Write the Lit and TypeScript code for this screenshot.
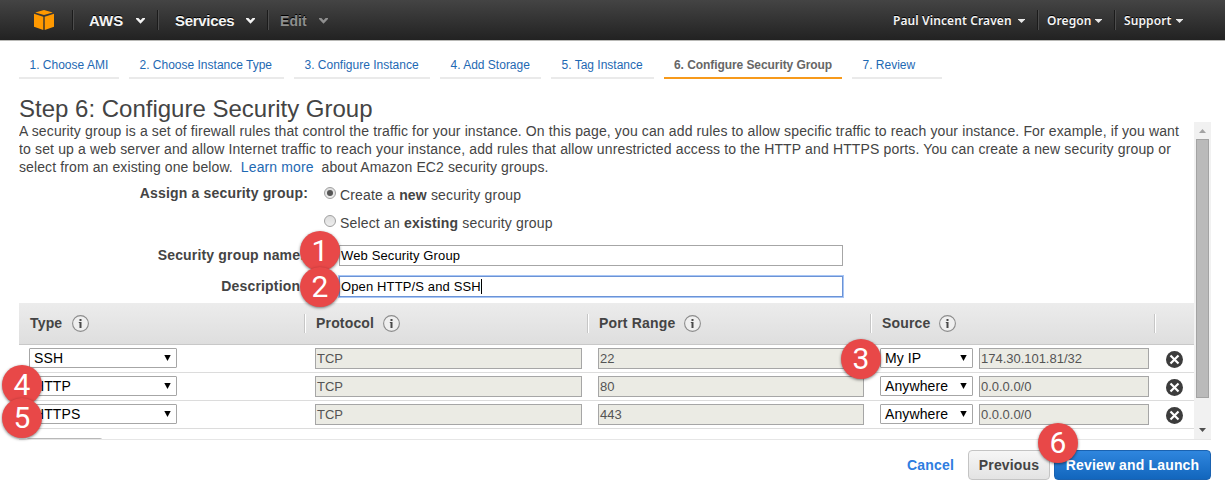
import { LitElement, html, css } from "lit";
import { customElement, property } from "lit/decorators.js";
import { classMap } from "lit/directives/class-map.js";

@customElement("info-icon")
class InfoIcon extends LitElement {
  static styles = css`
    :host { display: block; width: 17px; height: 17px; }
    svg { display: block; }
  `;
  render() {
    return html`<svg width="17" height="17" viewBox="0 0 17 17">
      <circle cx="8.5" cy="8.5" r="7.9" fill="#efefef" stroke="#8c8c8c" stroke-width="1.1" />
      <path d="M7.500 4h2v2h-2zM6.800 7h2.700v6h-2V8h-.7z" fill="#4a4a4a" />
    </svg>`;
  }
}

@customElement("select-box")
class SelectBox extends LitElement {
  @property() value = "";
  static styles = css`
    :host {
      display: flex; align-items: center; justify-content: space-between;
      box-sizing: border-box; height: 20px; padding: 0 5px 0 4px;
      border: 1px solid #a6a6a6; border-radius: 1px; background: #fff;
      color: #000; font-size: 14px; letter-spacing: 0.1px; line-height: 18px;
    }
    svg { display: block; }
  `;
  render() {
    return html`<span>${this.value}</span
      ><svg width="7" height="6" viewBox="0 0 7 6"><path d="M.3 0h6.4L3.5 6z" fill="#000" /></svg>`;
  }
}

const tabs = [
  { label: "1. Choose AMI", width: 100 },
  { label: "2. Choose Instance Type", width: 155 },
  { label: "3. Configure Instance", width: 136 },
  { label: "4. Add Storage", width: 101 },
  { label: "5. Tag Instance", width: 103 },
  { label: "6. Configure Security Group", width: 178, active: true },
  { label: "7. Review", width: 90 },
];

const rules = [
  { type: "SSH", protocol: "TCP", port: "22", source: "My IP", cidr: "174.30.101.81/32" },
  { type: "HTTP", protocol: "TCP", port: "80", source: "Anywhere", cidr: "0.0.0.0/0" },
  { type: "HTTPS", protocol: "TCP", port: "443", source: "Anywhere", cidr: "0.0.0.0/0" },
];

const callouts = [
  { n: 1, x: 320, y: 251 },
  { n: 2, x: 320, y: 287 },
  { n: 3, x: 861, y: 359 },
  { n: 4, x: 22, y: 385 },
  { n: 5, x: 22, y: 418 },
  { n: 6, x: 1058, y: 443 },
];

const chevron = html`<svg class="chev" width="9" height="6" viewBox="0 0 9 6">
  <path d="M0 0h2.4l2.1 2.3L6.6 0H9v1L4.5 5.7 0 1z" fill="currentColor" /></svg>`;
const caret = html`<svg class="caret" width="7" height="4" viewBox="0 0 7 4">
  <path d="M0 0h7v.6L3.5 4 0 .6z" fill="#e8e8e8" /></svg>`;

@customElement("app-root")
class AppRoot extends LitElement {
  static styles = css`
    :host {
      display: flex; flex-direction: column; position: relative; overflow: hidden;
      width: 1225px; height: 488px; box-sizing: border-box; background: #fff;
      font-family: "Liberation Sans", Arial, sans-serif; font-size: 14px; color: #444;
    }
    svg { display: block; flex: none; }
    .nav {
      flex: none; height: 40px; display: flex; align-items: center;
      background: linear-gradient(#444, #222); border-bottom: 1px solid #b9b9b6;
      color: #f4f4f4; text-shadow: 0 -1px 0 #000;
    }
    .cube { margin: 0 18px 0 34px; }
    .sep { width: 1px; height: 20px; background: #1b1b1b; border-right: 1px solid #4d4d4d; flex: none; }
    .menu {
      display: flex; align-items: center; justify-content: space-between; box-sizing: border-box;
      font-weight: bold; line-height: 20px; white-space: nowrap;
    }
    .menu span { padding-top: 2px; }
    .chev { margin-top: 2px; }
    .aws { width: 83px; padding: 0 12px 0 15px; }
    .aws, .services { font-size: 15px; }
    .services { width: 108px; padding: 0 12px 0 16px; letter-spacing: -0.3px; }
    .edit { width: 59px; padding-left: 11px; color: #8f8f8f; font-size: 14px; letter-spacing: 0.1px; }
    .right { margin-left: auto; display: flex; align-items: center; padding-right: 42px; }
    .acct {
      display: flex; align-items: center; justify-content: space-between; white-space: nowrap;
      box-sizing: border-box; font-family: "Noto Sans", sans-serif; font-weight: 600;
      font-size: 12px; line-height: 20px; letter-spacing: 0.1px;
    }
    .acct span { padding-top: 2px; }
    .caret { margin-top: 2px; }
    .user { width: 144px; padding-right: 12px; }
    .region { width: 75px; padding: 0 12px 0 8px; }
    .support { width: 67px; padding-left: 8px; }
    .tabs { flex: none; display: flex; gap: 10px; padding: 14px 0 0 19px; }
    .tab {
      box-sizing: border-box; height: 24px; padding-left: 10.5px; border-bottom: 2px solid #eaeaea;
      font-size: 12px; line-height: 20px; color: #1e69b3; white-space: nowrap;
    }
    .tab.active { padding-left: 10px; border-color: #f79a1b; color: #666; font-weight: bold; letter-spacing: -0.07px; }
    h1 { flex: none; margin: 13px 0 0 19px; height: 30px; line-height: 33px; font-size: 24px; font-weight: normal; }
    .scroller { flex: none; height: 317px; display: flex; margin: 0 14px 0 19px; border-bottom: 1px solid #e6e6e6; }
    .content { width: 1175px; height: 317px; overflow: hidden; letter-spacing: 0.17px; }
    .para { height: 54px; line-height: 18px; white-space: pre; letter-spacing: 0.13px; }
    .second { letter-spacing: 0.146px; }
    .last { letter-spacing: 0.11px; }
    .link { color: #1e69b3; }
    .form { display: flex; flex-direction: column; padding-top: 8px; height: 127px; box-sizing: border-box; }
    .field { display: flex; flex: none; line-height: 18px; }
    .pick { height: 28px; }
    .first { margin-top: 5px; }
    .text { height: 31px; }
    .label { width: 289px; text-align: right; font-weight: bold; box-sizing: border-box; }
    .text .label { padding: 1px 3px 0 0; }
    .radio {
      box-sizing: border-box; width: 12px; height: 12px; margin: 3px 4px 0 16px; border-radius: 50%;
      border: 1px solid #a0a0a0; background: linear-gradient(#ddd, #eee); flex: none;
      display: flex; align-items: center; justify-content: center;
    }
    .dot { width: 6px; height: 6px; border-radius: 50%; background: #555; }
    .choice { padding-top: 2px; }
    .input {
      box-sizing: border-box; width: 504px; height: 21px; margin-left: 31px; padding-left: 1px;
      border: 1px solid #a6a6a6; color: #000; font-size: 13px; line-height: 19px; letter-spacing: 0.13px;
      display: flex; align-items: center;
    }
    .focus { border-color: #6b93d6; box-shadow: 0 0 0 1px #a8c6f5; }
    .cursor { width: 1px; height: 15px; background: #000; }
    .cols { display: grid; grid-template-columns: 286px 283px 283px 284px 39px; }
    .thead {
      height: 42px; box-sizing: border-box; border-bottom: 1px solid #c8c8c8;
      background: linear-gradient(#ececec, #dedede); align-items: center;
    }
    .th {
      height: 19px; display: flex; align-items: center; gap: 9px; box-sizing: border-box;
      padding: 0 0 0 10px; border-left: 1px solid #fff; font-weight: bold; line-height: 19px;
      box-shadow: -1px 0 0 #c6c6c6;
    }
    .th:first-child { border: 0; box-shadow: none; padding-left: 11px; gap: 10px; }
    .row { height: 28px; box-sizing: border-box; border-bottom: 1px solid #dcdcdc; padding-top: 3px; }
    .type { width: 148px; margin-left: 10px; }
    .ro {
      box-sizing: border-box; height: 21px; border: 1px solid #a6a6a6; background: #ebebe4;
      color: #545454; font-size: 13px; line-height: 19px; padding-left: 1px; letter-spacing: -0.02px;
    }
    .protocol { width: 267px; margin-left: 10px; }
    .port { width: 266px; margin-left: 10px; }
    .source { display: flex; gap: 6px; padding-left: 9px; }
    .where { width: 93px; }
    .cidr { width: 170px; }
    .remove { padding: 3px 0 0 11px; }
    .add { margin: 9px 0 0 7px; width: 77px; height: 20px; box-sizing: border-box; border: 1px solid #b8b8b8; border-radius: 3px; background: #eee; }
    .bar { width: 17px; background: #f1f1f1; display: flex; flex-direction: column; align-items: center; flex: none; }
    .up { margin-top: 7px; }
    .thumb { margin-top: 6px; box-sizing: border-box; width: 13px; height: 259px; background: #bababa; border: 1px solid #a3a3a3; }
    .down { margin-top: 30px; }
    .footer { flex: none; display: flex; align-items: center; justify-content: flex-end; padding: 10px 14px 0 0; font-weight: bold; letter-spacing: 0.17px; }
    .cancel { color: #2e7de0; margin-right: 14px; }
    .btn {
      box-sizing: border-box; height: 30px; border: 1px solid #c4c4c4; border-radius: 4px;
      text-align: center; line-height: 28px; background: linear-gradient(#f6f6f6, #e3e3e3);
    }
    .prev { width: 82px; margin-right: 4px; }
    .primary { width: 157px; color: #fff; border-color: #1a62b0; background: linear-gradient(#2f86de, #1266bd); }
    .callout {
      position: absolute; width: 40px; height: 40px; margin: -20px 0 0 -20px; border-radius: 50%;
      background: #e84848; color: #fff; font-family: Roboto, sans-serif; font-size: 30px;
      line-height: 39px; text-align: center; box-shadow: 0 1px 3px rgba(0, 0, 0, 0.5);
    }
  `;

  render() {
    return html`
      <div class="nav">
        <svg class="cube" width="20" height="20" viewBox="0 0 20 20" fill="#f90">
          <path d="M10 0l8.800 2.500L10 5 1.200 2.500zM0 3.800l9.300 2.900V20L0 16.700zM20 3.800l-9.300 2.900V20L20 16.700z" />
        </svg>
        <div class="sep"></div>
        <div class="menu aws"><span>AWS</span>${chevron}</div>
        <div class="sep"></div>
        <div class="menu services"><span>Services</span>${chevron}</div>
        <div class="sep"></div>
        <div class="menu edit"><span>Edit</span>${chevron}</div>
        <div class="right">
          <div class="acct user"><span>Paul Vincent Craven</span>${caret}</div>
          <div class="sep"></div>
          <div class="acct region"><span>Oregon</span>${caret}</div>
          <div class="sep"></div>
          <div class="acct support"><span>Support</span>${caret}</div>
        </div>
      </div>
      <div class="tabs">
        ${tabs.map((t) => html`<div class=${classMap({ tab: true, active: !!t.active })} style="width:${t.width}px">${t.label}</div>`)}
      </div>
      <h1>Step 6: Configure Security Group</h1>
      <div class="scroller">
        <div class="content">
          <div class="para"><div>A security group is a set of firewall rules that control the traffic for your instance. On this page, you can add rules to allow specific traffic to reach your instance. For example, if you want</div><div class="second">to set up a web server and allow Internet traffic to reach your instance, add rules that allow unrestricted access to the HTTP and HTTPS ports. You can create a new security group or</div><div class="last">select from an existing one below.  <span class="link">Learn more</span>  about Amazon EC2 security groups.</div></div>
          <div class="form">
            <div class="field pick">
              <div class="label">Assign a security group:</div>
              <div class="radio"><div class="dot"></div></div>
              <div class="choice">Create a <b>new</b> security group</div>
            </div>
            <div class="field pick">
              <div class="label"></div>
              <div class="radio"></div>
              <div class="choice">Select an <b>existing</b> security group</div>
            </div>
            <div class="field text first">
              <div class="label">Security group name:</div>
              <div class="input">Web Security Group</div>
            </div>
            <div class="field text">
              <div class="label">Description:</div>
              <div class="input focus">Open HTTP/S and SSH<div class="cursor"></div></div>
            </div>
          </div>
          <div class="cols thead">
            ${["Type", "Protocol", "Port Range", "Source"].map(
              (h) => html`<div class="th"><span>${h}</span><info-icon></info-icon></div>`
            )}
            <div class="th"></div>
          </div>
          ${rules.map(
            (r) => html`<div class="cols row">
              <select-box class="type" .value=${r.type}></select-box>
              <div class="ro protocol">${r.protocol}</div>
              <div class="ro port">${r.port}</div>
              <div class="source">
                <select-box class="where" .value=${r.source}></select-box>
                <div class="ro cidr">${r.cidr}</div>
              </div>
              <div class="remove">
                <svg width="17" height="17" viewBox="0 0 17 17">
                  <circle cx="8.500" cy="8.500" r="8.500" fill="#3c3c3c" />
                  <path d="M4.500 4.500l8 8M12.500 4.500l-8 8" stroke="#fff" stroke-width="2.200" />
                </svg>
              </div>
            </div>`
          )}
          <div class="add"></div>
        </div>
        <div class="bar">
          <svg class="up" width="7" height="4" viewBox="0 0 7 4"><path d="M0 4L3.500 0 7 4z" fill="#a3a3a3" /></svg>
          <div class="thumb"></div>
          <svg class="down" width="7" height="4" viewBox="0 0 7 4"><path d="M0 0h7L3.500 4z" fill="#505050" /></svg>
        </div>
      </div>
      <div class="footer">
        <div class="cancel">Cancel</div>
        <div class="btn prev">Previous</div>
        <div class="btn primary">Review and Launch</div>
      </div>
      ${callouts.map((c) => html`<div class="callout" style="left:${c.x}px;top:${c.y}px">${c.n}</div>`)}
    `;
  }
}
